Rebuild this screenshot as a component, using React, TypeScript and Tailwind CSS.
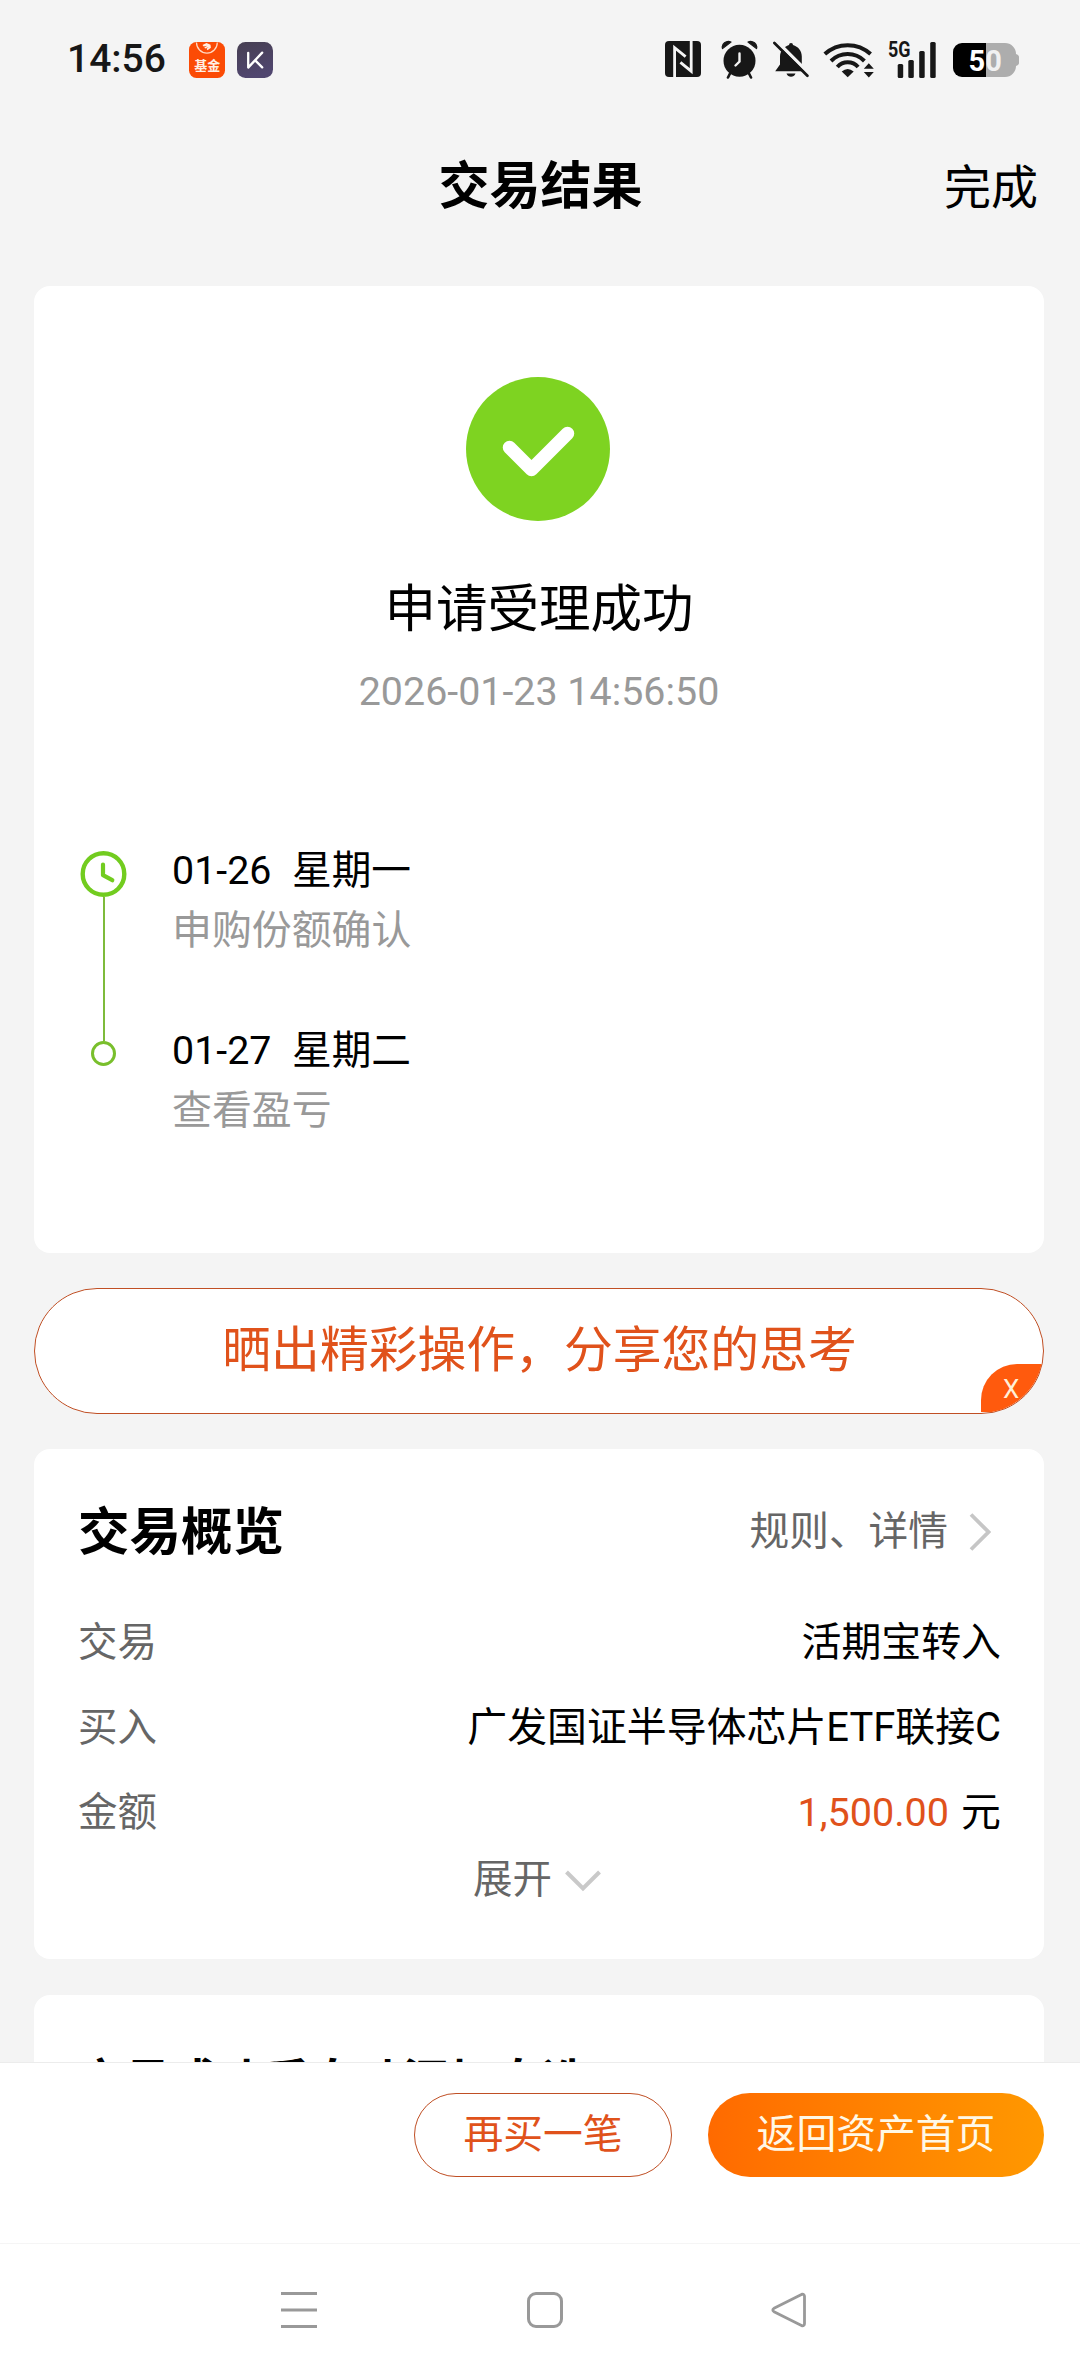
import React from 'react';

type Row = {
  label: string;
  value: string;
  amount?: boolean;
};

const ROWS: Row[] = [
  { label: '交易', value: '活期宝转入' },
  { label: '买入', value: '广发国证半导体芯片ETF联接C' },
  { label: '金额', value: '1,500.00', amount: true },
];

const STEPS = [
  { date: '01-26', day: '星期一', text: '申购份额确认' },
  { date: '01-27', day: '星期二', text: '查看盈亏' },
];

const FundIcon = () => (
  <svg width="36" height="36" viewBox="0 0 36 36" className="shrink-0">
    <rect width="36" height="36" rx="7.5" fill="#fb4b05" />
    <path d="M7.5 0.5a10.4 10.6 0 0 0 20.8 0" fill="none" stroke="#ffd9c4" strokeWidth="1.2" />
    <path d="M13.5 3l4-2 4 1.8.4 3-3.4 2.4-1-1.4 2.2-1.8-3.6 1.6-.8-1.2 3-1.6-3.6.6z" fill="#fff0e4" />
    <text x="5.2" y="28.2" fontSize="13" fontWeight="700" fill="#fff0e4" fontFamily="Noto Sans CJK SC, sans-serif">
      基金
    </text>
  </svg>
);

const KIcon = () => (
  <svg width="36" height="36" viewBox="0 0 36 36" className="shrink-0">
    <defs>
      <linearGradient id="kbg" x1="0" y1="0" x2="0.3" y2="1">
        <stop offset="0" stopColor="#473f52" />
        <stop offset="1" stopColor="#50466f" />
      </linearGradient>
    </defs>
    <rect width="36" height="36" rx="8.5" fill="url(#kbg)" />
    <path d="M11.2 10.8v14.8L25.2 10.6M18.2 18.4l7 7" fill="none" stroke="#fff" strokeWidth="2.3" strokeLinecap="round" strokeLinejoin="round" />
  </svg>
);

const NfcIcon = () => (
  <svg width="36" height="36" viewBox="0 0 36 36" className="shrink-0">
    <rect width="36" height="36" rx="4" fill="#171717" />
    <path d="M9.6 36V6.6l11 9M15.4 21.4l10.8 8.8V0" fill="none" stroke="#f4f4f4" strokeWidth="2.8" />
  </svg>
);

const AlarmIcon = () => (
  <svg width="37" height="39" viewBox="0 0 37 39" className="shrink-0">
    <path d="M1.5 8.6C0 4 5.5 0 10 2z" fill="#171717" stroke="#171717" strokeWidth="1.2" strokeLinejoin="round" />
    <path d="M35.5 8.6C37 4 31.5 0 27 2z" fill="#171717" stroke="#171717" strokeWidth="1.2" strokeLinejoin="round" />
    <path d="M9.5 32.5L7 37.5M27.5 32.5l2.5 5" stroke="#171717" strokeWidth="2.6" strokeLinecap="round" />
    <circle cx="18.5" cy="20.7" r="16" fill="#171717" />
    <path d="M18.5 13.5v8l-4 4" fill="none" stroke="#f4f4f4" strokeWidth="2.4" strokeLinecap="round" />
  </svg>
);

const MutedIcon = () => (
  <svg width="36" height="37" viewBox="0 0 36 37" className="shrink-0">
    <path d="M16 4a2 2 0 0 1 4 0c5.2 1.5 8.8 6 8.8 11.5v8l4.2 6.7H2.2l4.8-6.7v-8C7.2 10 11 5.5 16 4z" fill="#171717" />
    <path d="M13.5 32.4h9c-.8 2.2-2.5 3.3-4.5 3.3s-3.7-1.1-4.5-3.3z" fill="#171717" />
    <path d="M2-1.5L37.5 34" stroke="#f4f4f4" strokeWidth="3.4" />
    <path d="M1.4 2L34.4 34.8" stroke="#171717" strokeWidth="2.7" strokeLinecap="round" />
  </svg>
);

const WifiIcon = () => (
  <svg width="51" height="37" viewBox="0 0 51 37" className="shrink-0" fill="none" stroke="#171717" strokeWidth="4">
    <path d="M1.8 13A34 34 0 0 1 47.6 13" />
    <path d="M8 20A23.5 23.5 0 0 1 41.4 20" />
    <path d="M14.3 26A14 14 0 0 1 35.1 26" />
    <path d="M18.7 30.6Q24.7 25.6 30.7 30.6L24.7 36.3z" fill="#171717" stroke="none" />
    <path d="M45.8 22.2l5 5.6h-10zM45.8 36.6l5-5.6h-10z" fill="#171717" stroke="none" />
  </svg>
);

const SignalIcon = () => (
  <svg width="49" height="37" viewBox="0 0 49 37" className="shrink-0 overflow-visible" fill="#171717">
    <text x="0" y="15.5" fontSize="21.5" fontWeight="700" fontFamily="Roboto, sans-serif" textLength="22.5" lengthAdjust="spacingAndGlyphs">
      5G
    </text>
    <rect x="9.7" y="23" width="5.5" height="14" rx="1.5" />
    <rect x="20.3" y="19" width="5.5" height="18" rx="1.5" />
    <rect x="31.2" y="10" width="5.5" height="27" rx="1.5" />
    <rect x="42.2" y="1" width="5.5" height="36" rx="1.5" />
  </svg>
);

const Battery = () => (
  <svg width="66" height="34" viewBox="0 0 66 34" className="shrink-0">
    <path d="M33 0h19a11 11 0 0 1 11 11c1.8.6 3 1.6 3 3v6c0 1.4-1.2 2.4-3 3a11 11 0 0 1-11 11H33z" fill="#adadad" />
    <path d="M33 0H9a9 9 0 0 0-9 9v16a9 9 0 0 0 9 9h24z" fill="#000" />
    <text x="15.5" y="28" fontSize="29" fontWeight="700" fontFamily="Roboto, sans-serif" fill="#fff">
      5<tspan fill="#f1f1f1">0</tspan>
    </text>
  </svg>
);

const StatusBar = () => (
  <div className="flex h-[118px] shrink-0 items-center pl-[67px] pr-[61px]">
    <span className="w-[122px] text-[39px] font-medium leading-none text-[#171717]">14:56</span>
    <div className="flex gap-3 pt-[2px]">
      <FundIcon />
      <KIcon />
    </div>
    <div className="ml-auto flex items-center">
      <NfcIcon />
      <div className="ml-5">
        <AlarmIcon />
      </div>
      <div className="ml-[15px]">
        <MutedIcon />
      </div>
      <div className="ml-[14px]">
        <WifiIcon />
      </div>
      <div className="ml-[14px]">
        <SignalIcon />
      </div>
      <div className="ml-4 pt-[2px]">
        <Battery />
      </div>
    </div>
  </div>
);

const Timeline = () => (
  <div className="mt-[121px] flex pl-[46px]">
    <div className="mt-[10px] flex w-[47px] flex-col items-center">
      <svg width="47" height="46" viewBox="0 0 47 46" fill="none" stroke="#72cc1f" className="shrink-0">
        <circle cx="23.5" cy="23" r="20.8" strokeWidth="4.4" />
        <path d="M23 13.5v10.7l9.3 5" strokeWidth="4.2" strokeLinecap="round" strokeLinejoin="round" />
      </svg>
      <div className="h-[144px] w-[2px] bg-[#7ebb3b]" />
      <div className="h-[25px] w-[25px] rounded-full border-[3px] border-[#79bf2c]" />
    </div>
    <div className="ml-[45px]">
      {STEPS.map(step => (
        <div key={step.date} className="h-[180px] text-[39.7px] leading-[60px]">
          <p className="flex text-black">
            <span className="w-[120px] text-[39.4px]">{step.date}</span>
            {step.day}
          </p>
          <p className="text-[39.9px] text-[#999]">{step.text}</p>
        </div>
      ))}
    </div>
  </div>
);

const ResultCard = () => (
  <section className="h-[967px] rounded-[16px] bg-white pt-[91px]">
    <svg width="144" height="144" viewBox="0 0 144 144" className="ml-[432px]">
      <circle cx="72" cy="72" r="72" fill="#7ed321" />
      <path d="M43.5 70.5l22 22L101.5 56.5" fill="none" stroke="#fff" strokeWidth="13.5" strokeLinecap="round" strokeLinejoin="round" />
    </svg>
    <h2 className="mt-[54px] text-center text-[51.5px] leading-[70px] text-black">申请受理成功</h2>
    <p className="mt-[19px] text-center text-[39.4px] leading-[56px] text-[#999]">2026-01-23 14:56:50</p>
    <Timeline />
  </section>
);

const ShareBar = () => (
  <div className="relative mt-[35px] flex h-[126px] items-center justify-center overflow-hidden rounded-full border border-[#c04f24] bg-white">
    <span className="pl-[1px] text-[48.8px] leading-[70px] text-[#e0521b]">晒出精彩操作，分享您的思考</span>
    <button className="absolute bottom-[1px] right-0 flex h-[48px] w-[62px] items-center rounded-tl-[36px] bg-[#ff5a0d] pl-[22px] pt-[2px] text-[26px] text-[#fff0d8]">
      X
    </button>
  </div>
);

const OverviewCard = () => (
  <section className="mt-[35px] h-[510px] rounded-[16px] bg-white pl-[44px] pr-[43px] pt-[48px]">
    <div className="flex h-[70px] items-center justify-between">
      <h3 className="pt-[2px] text-[51.5px] font-bold leading-[70px] text-black">交易概览</h3>
      <div className="flex items-center pr-[10px] text-[39.7px] text-[#666]">
        规则、详情
        <svg width="22" height="38" viewBox="0 0 22 38" fill="none" stroke="#c6c6c6" strokeWidth="3.8" className="ml-[21px]">
          <path d="M2 1.5L19.5 19 2 36.5" />
        </svg>
      </div>
    </div>
    <div className="mt-[33px]">
      {ROWS.map(row => (
        <div key={row.label} className="flex h-[85px] items-center justify-between text-[39.9px]">
          <span className="text-[39.5px] text-[#666]">{row.label}</span>
          {row.amount ? (
            <span className="flex text-black">
              <span className="mr-[12px] text-[39.6px] text-[#e0521b]">{row.value}</span>元
            </span>
          ) : (
            <span className="text-black">{row.value}</span>
          )}
        </div>
      ))}
    </div>
    <div className="-mt-[5px] flex h-[60px] items-center pl-[395px] text-[39.5px] text-[#666]">
      展开
      <svg width="36" height="22" viewBox="0 0 36 22" fill="none" stroke="#c9c9c9" strokeWidth="4" className="ml-[13px] mt-[2px]">
        <path d="M1.5 2L18 18.5 34.5 2" />
      </svg>
    </div>
  </section>
);

const BottomBar = () => (
  <div className="flex h-[181px] shrink-0 items-start justify-end gap-[36px] border-t border-[#ececec] bg-white pr-[36px] pt-[30px] text-[39.8px] leading-none">
    <button className="h-[84px] w-[258px] rounded-full border border-[#c04f24] text-[#e0521b]">再买一笔</button>
    <button className="h-[84px] w-[336px] rounded-full bg-linear-to-r from-[#ff6a00] to-[#ff9800] text-[#fff8e6]">返回资产首页</button>
  </div>
);

const NavBar = () => (
  <div className="flex h-[133px] shrink-0 items-center border-t border-[#f5f5f5] bg-white pl-[281px]">
    <svg width="36" height="36" viewBox="0 0 36 36" stroke="#999" strokeWidth="3">
      <path d="M0 1.5h36M0 18h36M0 34.5h36" />
    </svg>
    <div className="ml-[210px] h-[36px] w-[36px] rounded-[9px] border-[3px] border-[#999]" />
    <svg width="36" height="36" viewBox="0 0 36 36" fill="none" stroke="#999" strokeWidth="2.8" className="ml-[208px]">
      <path d="M31 2.2L3 16.3Q0.6 18 3 19.7L31 33.8Q33.5 34 33.5 31.5V4.5Q33.5 2 31 2.2z" strokeLinejoin="round" />
    </svg>
  </div>
);

const App: React.FC = () => {
  return (
    <div className="flex h-[2376px] w-[1080px] flex-col overflow-hidden bg-[#f4f4f4] font-['Roboto','Noto_Sans_CJK_SC',sans-serif]">
      <StatusBar />
      <header className="grid h-[168px] shrink-0 grid-cols-[1fr_auto_1fr] items-start pl-[43px] pr-[42px] pt-[34px] leading-[70px] text-black">
        <h1 className="col-start-2 text-[51px] font-bold">交易结果</h1>
        <span className="mt-[1px] text-right text-[47px]">完成</span>
      </header>
      <main className="ml-[34px] mr-[36px] min-h-0 flex-1 overflow-hidden">
        <ResultCard />
        <ShareBar />
        <OverviewCard />
        {/* runs on under the bottom bar */}
        <section className="mt-[36px] h-[300px] rounded-[16px] bg-white pl-[44px] pt-[52px]">
          <h3 className="text-[46.4px] font-bold leading-[70px] text-black">交易成功后自动添加自选</h3>
        </section>
      </main>
      <BottomBar />
      <NavBar />
    </div>
  );
};

export default App;
